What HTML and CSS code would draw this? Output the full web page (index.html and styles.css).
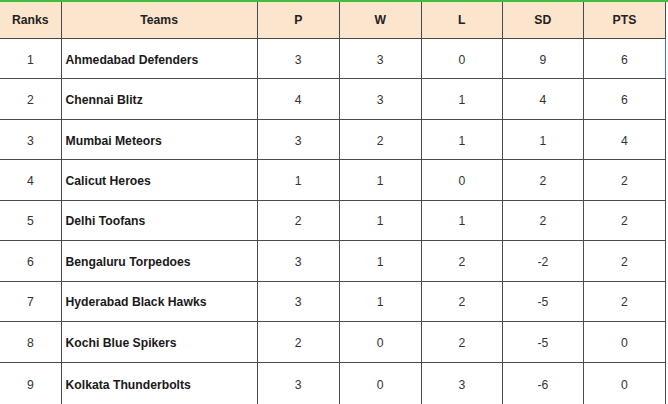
FILE: index.html
```html
<!DOCTYPE html>
<html>
<head>
<meta charset="utf-8">
<link rel="stylesheet" href="styles.css">
</head>
<body>
<div class="topline"></div>
<table class="standings">
<colgroup>
<col class="c-rank"><col class="c-team"><col class="c-p"><col class="c-w"><col class="c-l"><col class="c-sd"><col class="c-pts">
</colgroup>
<thead>
<tr><th>Ranks</th><th>Teams</th><th>P</th><th>W</th><th>L</th><th>SD</th><th>PTS</th></tr>
</thead>
<tbody>
<tr><td>1</td><td class="team">Ahmedabad Defenders</td><td>3</td><td>3</td><td>0</td><td>9</td><td class="sel">6</td></tr>
<tr><td>2</td><td class="team">Chennai Blitz</td><td>4</td><td>3</td><td>1</td><td>4</td><td>6</td></tr>
<tr><td>3</td><td class="team">Mumbai Meteors</td><td>3</td><td>2</td><td>1</td><td>1</td><td>4</td></tr>
<tr><td>4</td><td class="team">Calicut Heroes</td><td>1</td><td>1</td><td>0</td><td>2</td><td>2</td></tr>
<tr><td>5</td><td class="team">Delhi Toofans</td><td>2</td><td>1</td><td>1</td><td>2</td><td>2</td></tr>
<tr><td>6</td><td class="team">Bengaluru Torpedoes</td><td>3</td><td>1</td><td>2</td><td>-2</td><td>2</td></tr>
<tr><td>7</td><td class="team">Hyderabad Black Hawks</td><td>3</td><td>1</td><td>2</td><td>-5</td><td>2</td></tr>
<tr><td>8</td><td class="team">Kochi Blue Spikers</td><td>2</td><td>0</td><td>2</td><td>-5</td><td>0</td></tr>
<tr class="last"><td>9</td><td class="team">Kolkata Thunderbolts</td><td>3</td><td>0</td><td>3</td><td>-6</td><td>0</td></tr>
</tbody>
</table>
</body>
</html>
```
FILE: styles.css
```css
html, body {
  margin: 0;
  padding: 0;
  background: #ffffff;
}
body {
  width: 668px;
  height: 404px;
  overflow: hidden;
  font-family: "Liberation Sans", Arial, sans-serif;
  color: #222222;
}
.topline {
  height: 2px;
  background: #3fbf3a;
}
.standings {
  border-collapse: collapse;
  table-layout: fixed;
  width: 666px;
}
.c-rank { width: 61px; }
.c-team { width: 196px; }
.c-p { width: 82px; }
.c-w { width: 82px; }
.c-l { width: 81px; }
.c-sd { width: 81px; }
.c-pts { width: 82px; }
.standings th,
.standings td {
  border: 1px solid #4a4a4a;
  text-align: center;
  padding: 0 4px;
  overflow: hidden;
  white-space: nowrap;
}
.standings tr > :first-child {
  border-left: none;
}
.standings thead tr > * {
  border-top: none;
}
.standings th {
  background: #fce5cd;
  font-weight: bold;
  font-size: 12.2px;
  height: 36px;
}
.standings td {
  font-size: 12.2px;
  height: 37.45px;
  padding-top: 2px;
  color: #333333;
}
.standings tr.last > td {
  border-bottom: none;
  padding-top: 0;
  padding-bottom: 0;
  height: 44px;
  vertical-align: top;
  line-height: 44px;
}
.standings tr.last > td {
  padding-top: 0;
}
.standings td.team {
  text-align: left;
  font-weight: bold;
  color: #1a1a1a;
}
.standings td.sel {
  border-right-color: #3b6fd6;
}
```
